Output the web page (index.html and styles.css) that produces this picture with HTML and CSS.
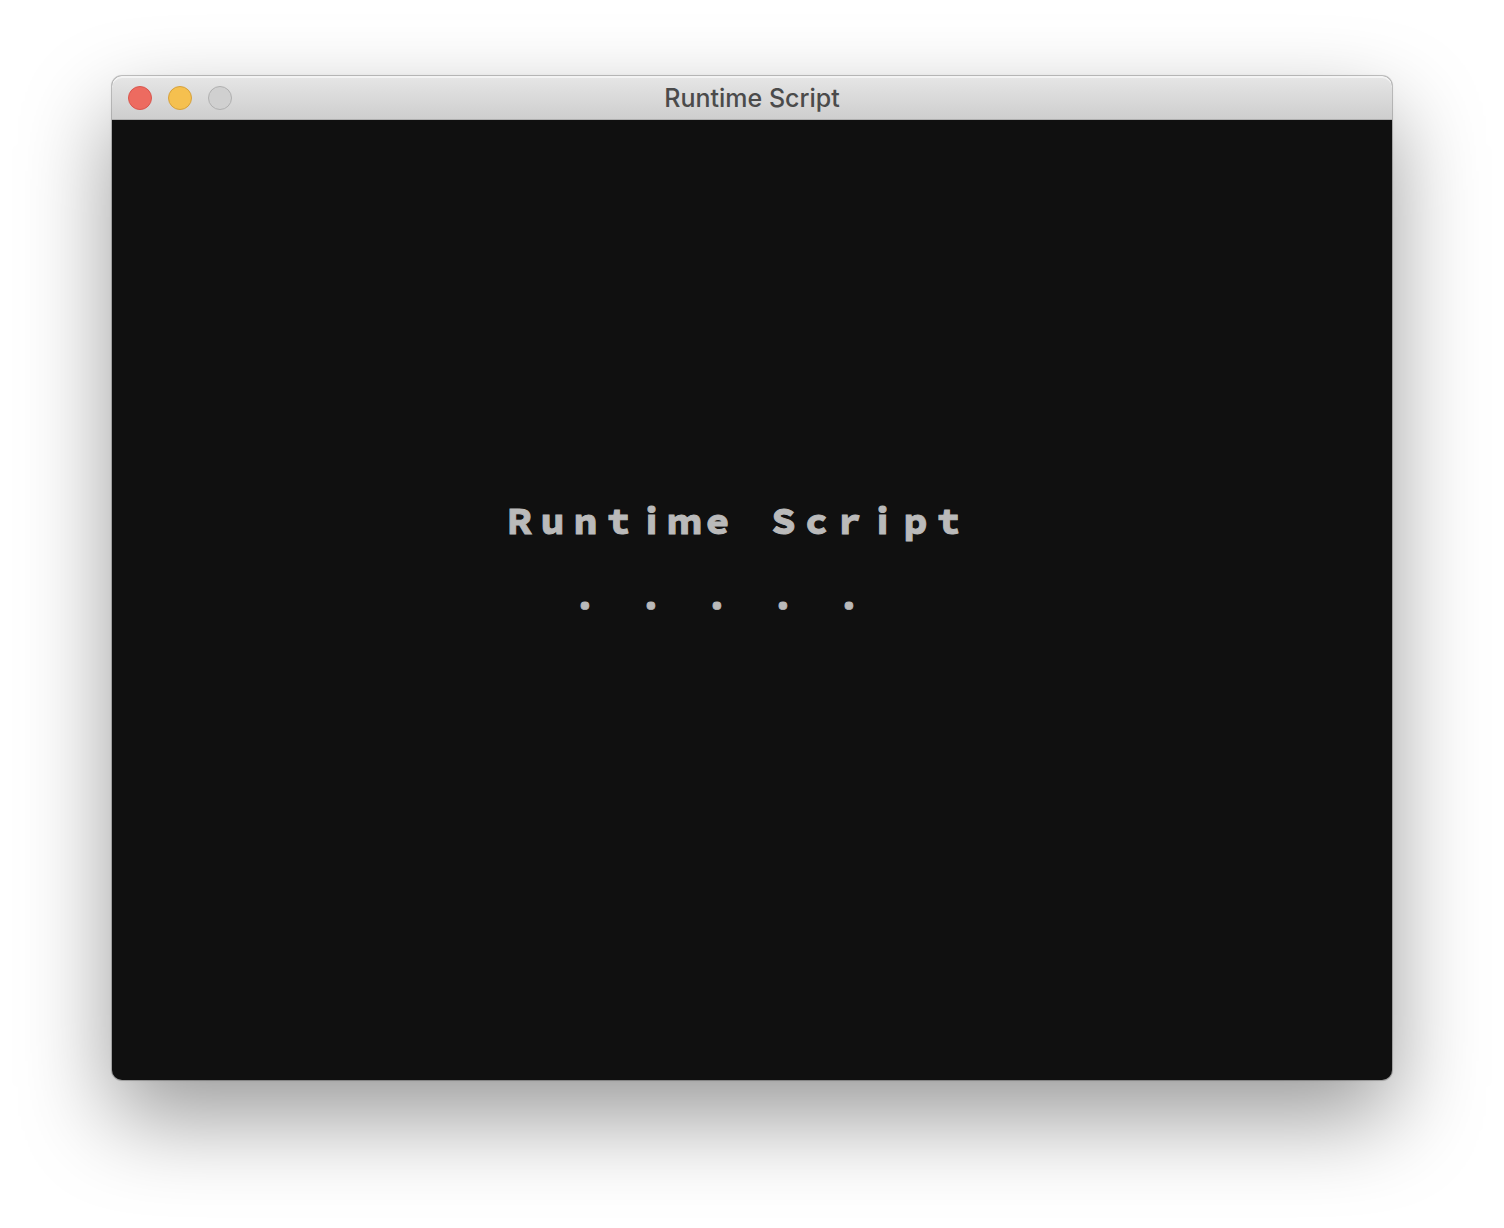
FILE: index.html
```html
<!DOCTYPE html>
<html lang="en">
<head>
  <meta charset="utf-8">
  <meta name="viewport" content="width=device-width, initial-scale=1">
  <title>Runtime Script</title>
  <link rel="stylesheet" href="styles.css">
</head>
<body>
  <main class="window">
    <header class="titlebar">
      <div class="controls">
        <button class="control control-close" type="button" aria-label="Close"></button>
        <button class="control control-minimize" type="button" aria-label="Minimize"></button>
        <button class="control control-zoom" type="button" aria-label="Zoom" disabled></button>
      </div>
      <h1 class="title">Runtime Script</h1>
    </header>
    <section class="screen">
      <div class="splash">
        <p class="line">Runtime Script</p>
        <p class="line line-dots">. . . . .</p>
      </div>
    </section>
  </main>
</body>
</html>
```
FILE: styles.css
```css
* {
  box-sizing: border-box;
}

body {
  margin: 0;
  padding: 76px 112px 148px;
  background: #fff;
}

.window {
  border-radius: 10px;
  background: #101010;
  box-shadow:
    0 0 0 1px rgba(0, 0, 0, 0.2),
    0 0 3px rgba(0, 0, 0, 0.1),
    0 38px 90px rgba(0, 0, 0, 0.4);
}

.titlebar {
  display: grid;
  grid-template-columns: 1fr auto 1fr;
  align-items: center;
  height: 44px;
  padding: 0 16px;
  border-bottom: 1px solid #afafaf;
  border-radius: 10px 10px 0 0;
  background: linear-gradient(#e6e6e6, #cecece);
  box-shadow: inset 0 2px 0 #f3f3f3;
}

.controls {
  display: flex;
  gap: 16px;
}

.control {
  width: 24px;
  height: 24px;
  padding: 0;
  border: 1px solid;
  border-radius: 50%;
}

.control-close {
  border-color: #d9564e;
  background: #ed6b60;
}

.control-minimize {
  border-color: #d6a13c;
  background: #f5c04f;
}

.control-zoom {
  border-color: #b0b0b0;
  background: #d0d0d0;
}

.title {
  margin: 0;
  color: #4b4b4b;
  font: 500 25px/32px Inter, sans-serif;
}

.screen {
  display: grid;
  place-items: center;
  aspect-ratio: 4 / 3;
}

/* The splash is a fixed-pitch character grid drawn with full-width forms. */
.splash {
  display: grid;
  gap: 36px;
  padding: 0 36px 84px 0;
}

.line {
  margin: 0;
  color: #bababa;
  font: 900 33px/40px "Noto Sans CJK JP", monospace;
  font-variant-east-asian: full-width;
  white-space: nowrap;
  -webkit-text-stroke: 1px #bababa;
}

.line-dots {
  padding-left: 72px;
}
```
